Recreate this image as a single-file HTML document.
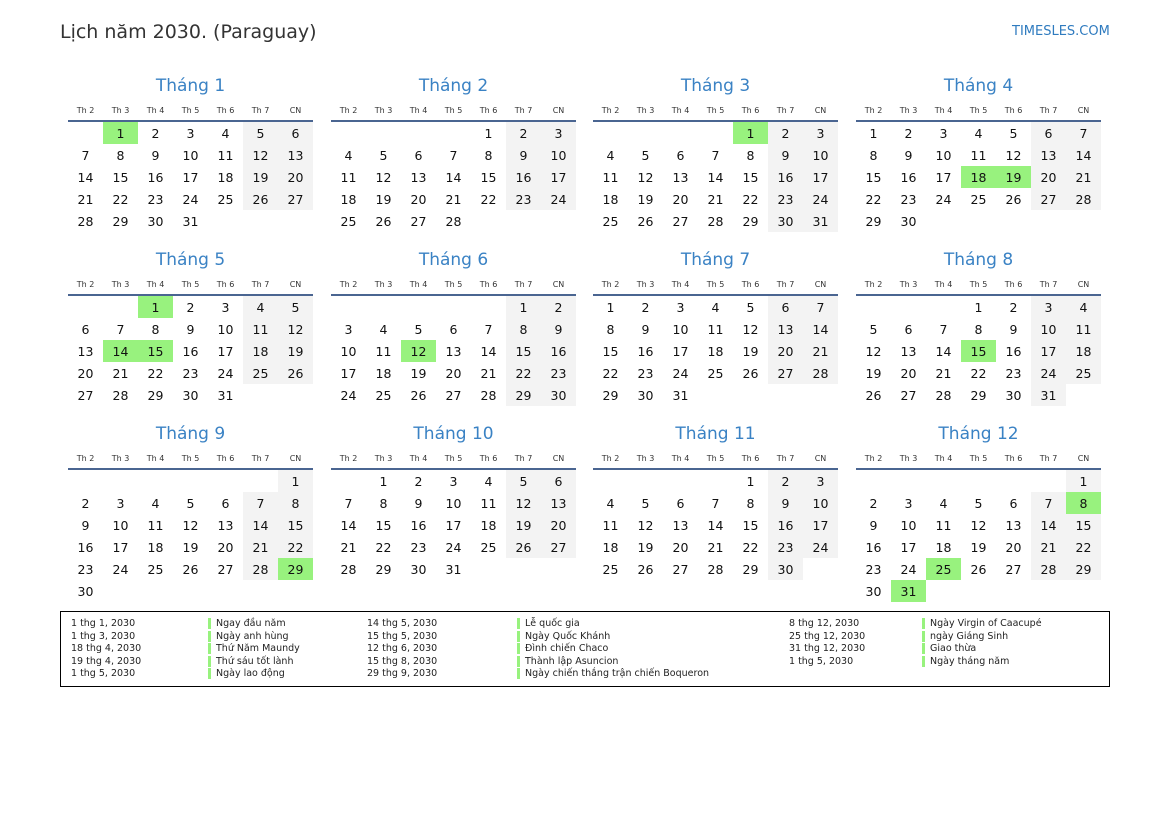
<!DOCTYPE html>
<html><head><meta charset="utf-8"><style>
*{margin:0;padding:0;box-sizing:border-box}
body{width:1169px;height:827px;background:#fff;font-family:"DejaVu Sans","Liberation Sans",sans-serif;color:#222;position:relative;overflow:hidden}
.t{position:absolute;left:60px;top:21px;font-size:19px;color:#333}
.s{position:absolute;left:1012px;top:24px;font-size:13px;color:#2f7bbf}
.m{position:absolute;width:245px}
.m h2{position:absolute;top:0;left:0;width:245px;text-align:center;font-weight:normal;font-size:17px;line-height:26px;color:#3a82c4}
.hd{position:absolute;top:32px;left:0;display:grid;grid-template-columns:repeat(7,35px);font-size:8px;line-height:12px;text-align:center;color:#333}
.ln{position:absolute;top:47px;left:0;width:245px;height:2px;background:#4a6591}
.g{position:absolute;top:49px;left:0;display:grid;grid-template-columns:repeat(7,35px);grid-auto-rows:22px;font-size:12.5px;text-align:center;line-height:23px;color:#111}
.g i,.g b{font-style:normal;font-weight:normal}
.w{background:#f3f3f3}
.h{background:#98f27e!important}
.lg{position:absolute;left:60px;top:611px;width:1050px;height:76px;border:1px solid #000;font-size:9.5px;color:#222}
.lg div{position:absolute;top:6px;line-height:12.5px;white-space:nowrap}
.bar{border-left:3px solid #98f27e;padding-left:5px}
</style></head><body>
<div class="t">Lịch năm 2030. (Paraguay)</div>
<div class="s">TIMESLES.COM</div>

<div class="m" style="left:68px;top:73px"><h2>Tháng 1</h2><div class="hd"><span>Th 2</span><span>Th 3</span><span>Th 4</span><span>Th 5</span><span>Th 6</span><span>Th 7</span><span>CN</span></div><div class="ln"></div><div class="g">
<b></b><b class="h">1</b><b>2</b><b>3</b><b>4</b><b class="w">5</b><b class="w">6</b>
<b>7</b><b>8</b><b>9</b><b>10</b><b>11</b><b class="w">12</b><b class="w">13</b>
<b>14</b><b>15</b><b>16</b><b>17</b><b>18</b><b class="w">19</b><b class="w">20</b>
<b>21</b><b>22</b><b>23</b><b>24</b><b>25</b><b class="w">26</b><b class="w">27</b>
<b>28</b><b>29</b><b>30</b><b>31</b></div></div>

<div class="m" style="left:331px;top:73px"><h2>Tháng 2</h2><div class="hd"><span>Th 2</span><span>Th 3</span><span>Th 4</span><span>Th 5</span><span>Th 6</span><span>Th 7</span><span>CN</span></div><div class="ln"></div><div class="g">
<b></b><b></b><b></b><b></b><b>1</b><b class="w">2</b><b class="w">3</b>
<b>4</b><b>5</b><b>6</b><b>7</b><b>8</b><b class="w">9</b><b class="w">10</b>
<b>11</b><b>12</b><b>13</b><b>14</b><b>15</b><b class="w">16</b><b class="w">17</b>
<b>18</b><b>19</b><b>20</b><b>21</b><b>22</b><b class="w">23</b><b class="w">24</b>
<b>25</b><b>26</b><b>27</b><b>28</b></div></div>

<div class="m" style="left:593px;top:73px"><h2>Tháng 3</h2><div class="hd"><span>Th 2</span><span>Th 3</span><span>Th 4</span><span>Th 5</span><span>Th 6</span><span>Th 7</span><span>CN</span></div><div class="ln"></div><div class="g">
<b></b><b></b><b></b><b></b><b class="h">1</b><b class="w">2</b><b class="w">3</b>
<b>4</b><b>5</b><b>6</b><b>7</b><b>8</b><b class="w">9</b><b class="w">10</b>
<b>11</b><b>12</b><b>13</b><b>14</b><b>15</b><b class="w">16</b><b class="w">17</b>
<b>18</b><b>19</b><b>20</b><b>21</b><b>22</b><b class="w">23</b><b class="w">24</b>
<b>25</b><b>26</b><b>27</b><b>28</b><b>29</b><b class="w">30</b><b class="w">31</b></div></div>

<div class="m" style="left:856px;top:73px"><h2>Tháng 4</h2><div class="hd"><span>Th 2</span><span>Th 3</span><span>Th 4</span><span>Th 5</span><span>Th 6</span><span>Th 7</span><span>CN</span></div><div class="ln"></div><div class="g">
<b>1</b><b>2</b><b>3</b><b>4</b><b>5</b><b class="w">6</b><b class="w">7</b>
<b>8</b><b>9</b><b>10</b><b>11</b><b>12</b><b class="w">13</b><b class="w">14</b>
<b>15</b><b>16</b><b>17</b><b class="h">18</b><b class="h">19</b><b class="w">20</b><b class="w">21</b>
<b>22</b><b>23</b><b>24</b><b>25</b><b>26</b><b class="w">27</b><b class="w">28</b>
<b>29</b><b>30</b></div></div>

<div class="m" style="left:68px;top:247px"><h2>Tháng 5</h2><div class="hd"><span>Th 2</span><span>Th 3</span><span>Th 4</span><span>Th 5</span><span>Th 6</span><span>Th 7</span><span>CN</span></div><div class="ln"></div><div class="g">
<b></b><b></b><b class="h">1</b><b>2</b><b>3</b><b class="w">4</b><b class="w">5</b>
<b>6</b><b>7</b><b>8</b><b>9</b><b>10</b><b class="w">11</b><b class="w">12</b>
<b>13</b><b class="h">14</b><b class="h">15</b><b>16</b><b>17</b><b class="w">18</b><b class="w">19</b>
<b>20</b><b>21</b><b>22</b><b>23</b><b>24</b><b class="w">25</b><b class="w">26</b>
<b>27</b><b>28</b><b>29</b><b>30</b><b>31</b></div></div>

<div class="m" style="left:331px;top:247px"><h2>Tháng 6</h2><div class="hd"><span>Th 2</span><span>Th 3</span><span>Th 4</span><span>Th 5</span><span>Th 6</span><span>Th 7</span><span>CN</span></div><div class="ln"></div><div class="g">
<b></b><b></b><b></b><b></b><b></b><b class="w">1</b><b class="w">2</b>
<b>3</b><b>4</b><b>5</b><b>6</b><b>7</b><b class="w">8</b><b class="w">9</b>
<b>10</b><b>11</b><b class="h">12</b><b>13</b><b>14</b><b class="w">15</b><b class="w">16</b>
<b>17</b><b>18</b><b>19</b><b>20</b><b>21</b><b class="w">22</b><b class="w">23</b>
<b>24</b><b>25</b><b>26</b><b>27</b><b>28</b><b class="w">29</b><b class="w">30</b></div></div>

<div class="m" style="left:593px;top:247px"><h2>Tháng 7</h2><div class="hd"><span>Th 2</span><span>Th 3</span><span>Th 4</span><span>Th 5</span><span>Th 6</span><span>Th 7</span><span>CN</span></div><div class="ln"></div><div class="g">
<b>1</b><b>2</b><b>3</b><b>4</b><b>5</b><b class="w">6</b><b class="w">7</b>
<b>8</b><b>9</b><b>10</b><b>11</b><b>12</b><b class="w">13</b><b class="w">14</b>
<b>15</b><b>16</b><b>17</b><b>18</b><b>19</b><b class="w">20</b><b class="w">21</b>
<b>22</b><b>23</b><b>24</b><b>25</b><b>26</b><b class="w">27</b><b class="w">28</b>
<b>29</b><b>30</b><b>31</b></div></div>

<div class="m" style="left:856px;top:247px"><h2>Tháng 8</h2><div class="hd"><span>Th 2</span><span>Th 3</span><span>Th 4</span><span>Th 5</span><span>Th 6</span><span>Th 7</span><span>CN</span></div><div class="ln"></div><div class="g">
<b></b><b></b><b></b><b>1</b><b>2</b><b class="w">3</b><b class="w">4</b>
<b>5</b><b>6</b><b>7</b><b>8</b><b>9</b><b class="w">10</b><b class="w">11</b>
<b>12</b><b>13</b><b>14</b><b class="h">15</b><b>16</b><b class="w">17</b><b class="w">18</b>
<b>19</b><b>20</b><b>21</b><b>22</b><b>23</b><b class="w">24</b><b class="w">25</b>
<b>26</b><b>27</b><b>28</b><b>29</b><b>30</b><b class="w">31</b></div></div>

<div class="m" style="left:68px;top:421px"><h2>Tháng 9</h2><div class="hd"><span>Th 2</span><span>Th 3</span><span>Th 4</span><span>Th 5</span><span>Th 6</span><span>Th 7</span><span>CN</span></div><div class="ln"></div><div class="g">
<b></b><b></b><b></b><b></b><b></b><b></b><b class="w">1</b>
<b>2</b><b>3</b><b>4</b><b>5</b><b>6</b><b class="w">7</b><b class="w">8</b>
<b>9</b><b>10</b><b>11</b><b>12</b><b>13</b><b class="w">14</b><b class="w">15</b>
<b>16</b><b>17</b><b>18</b><b>19</b><b>20</b><b class="w">21</b><b class="w">22</b>
<b>23</b><b>24</b><b>25</b><b>26</b><b>27</b><b class="w">28</b><b class="h">29</b>
<b>30</b></div></div>

<div class="m" style="left:331px;top:421px"><h2>Tháng 10</h2><div class="hd"><span>Th 2</span><span>Th 3</span><span>Th 4</span><span>Th 5</span><span>Th 6</span><span>Th 7</span><span>CN</span></div><div class="ln"></div><div class="g">
<b></b><b>1</b><b>2</b><b>3</b><b>4</b><b class="w">5</b><b class="w">6</b>
<b>7</b><b>8</b><b>9</b><b>10</b><b>11</b><b class="w">12</b><b class="w">13</b>
<b>14</b><b>15</b><b>16</b><b>17</b><b>18</b><b class="w">19</b><b class="w">20</b>
<b>21</b><b>22</b><b>23</b><b>24</b><b>25</b><b class="w">26</b><b class="w">27</b>
<b>28</b><b>29</b><b>30</b><b>31</b></div></div>

<div class="m" style="left:593px;top:421px"><h2>Tháng 11</h2><div class="hd"><span>Th 2</span><span>Th 3</span><span>Th 4</span><span>Th 5</span><span>Th 6</span><span>Th 7</span><span>CN</span></div><div class="ln"></div><div class="g">
<b></b><b></b><b></b><b></b><b>1</b><b class="w">2</b><b class="w">3</b>
<b>4</b><b>5</b><b>6</b><b>7</b><b>8</b><b class="w">9</b><b class="w">10</b>
<b>11</b><b>12</b><b>13</b><b>14</b><b>15</b><b class="w">16</b><b class="w">17</b>
<b>18</b><b>19</b><b>20</b><b>21</b><b>22</b><b class="w">23</b><b class="w">24</b>
<b>25</b><b>26</b><b>27</b><b>28</b><b>29</b><b class="w">30</b></div></div>

<div class="m" style="left:856px;top:421px"><h2>Tháng 12</h2><div class="hd"><span>Th 2</span><span>Th 3</span><span>Th 4</span><span>Th 5</span><span>Th 6</span><span>Th 7</span><span>CN</span></div><div class="ln"></div><div class="g">
<b></b><b></b><b></b><b></b><b></b><b></b><b class="w">1</b>
<b>2</b><b>3</b><b>4</b><b>5</b><b>6</b><b class="w">7</b><b class="h">8</b>
<b>9</b><b>10</b><b>11</b><b>12</b><b>13</b><b class="w">14</b><b class="w">15</b>
<b>16</b><b>17</b><b>18</b><b>19</b><b>20</b><b class="w">21</b><b class="w">22</b>
<b>23</b><b>24</b><b class="h">25</b><b>26</b><b>27</b><b class="w">28</b><b class="w">29</b>
<b>30</b><b class="h">31</b></div></div>

<div class="lg">
<div style="left:10px">1 thg 1, 2030<br>1 thg 3, 2030<br>18 thg 4, 2030<br>19 thg 4, 2030<br>1 thg 5, 2030</div>
<div style="left:147px"><span class="bar">Ngay đầu năm</span><br><span class="bar">Ngày anh hùng</span><br><span class="bar">Thứ Năm Maundy</span><br><span class="bar">Thứ sáu tốt lành</span><br><span class="bar">Ngày lao động</span></div>
<div style="left:306px">14 thg 5, 2030<br>15 thg 5, 2030<br>12 thg 6, 2030<br>15 thg 8, 2030<br>29 thg 9, 2030</div>
<div style="left:456px"><span class="bar">Lễ quốc gia</span><br><span class="bar">Ngày Quốc Khánh</span><br><span class="bar">Đình chiến Chaco</span><br><span class="bar">Thành lập Asuncion</span><br><span class="bar">Ngày chiến thắng trận chiến Boqueron</span></div>
<div style="left:728px">8 thg 12, 2030<br>25 thg 12, 2030<br>31 thg 12, 2030<br>1 thg 5, 2030</div>
<div style="left:861px"><span class="bar">Ngày Virgin of Caacupé</span><br><span class="bar">ngày Giáng Sinh</span><br><span class="bar">Giao thừa</span><br><span class="bar">Ngày tháng năm</span></div>
</div>
</body></html>
